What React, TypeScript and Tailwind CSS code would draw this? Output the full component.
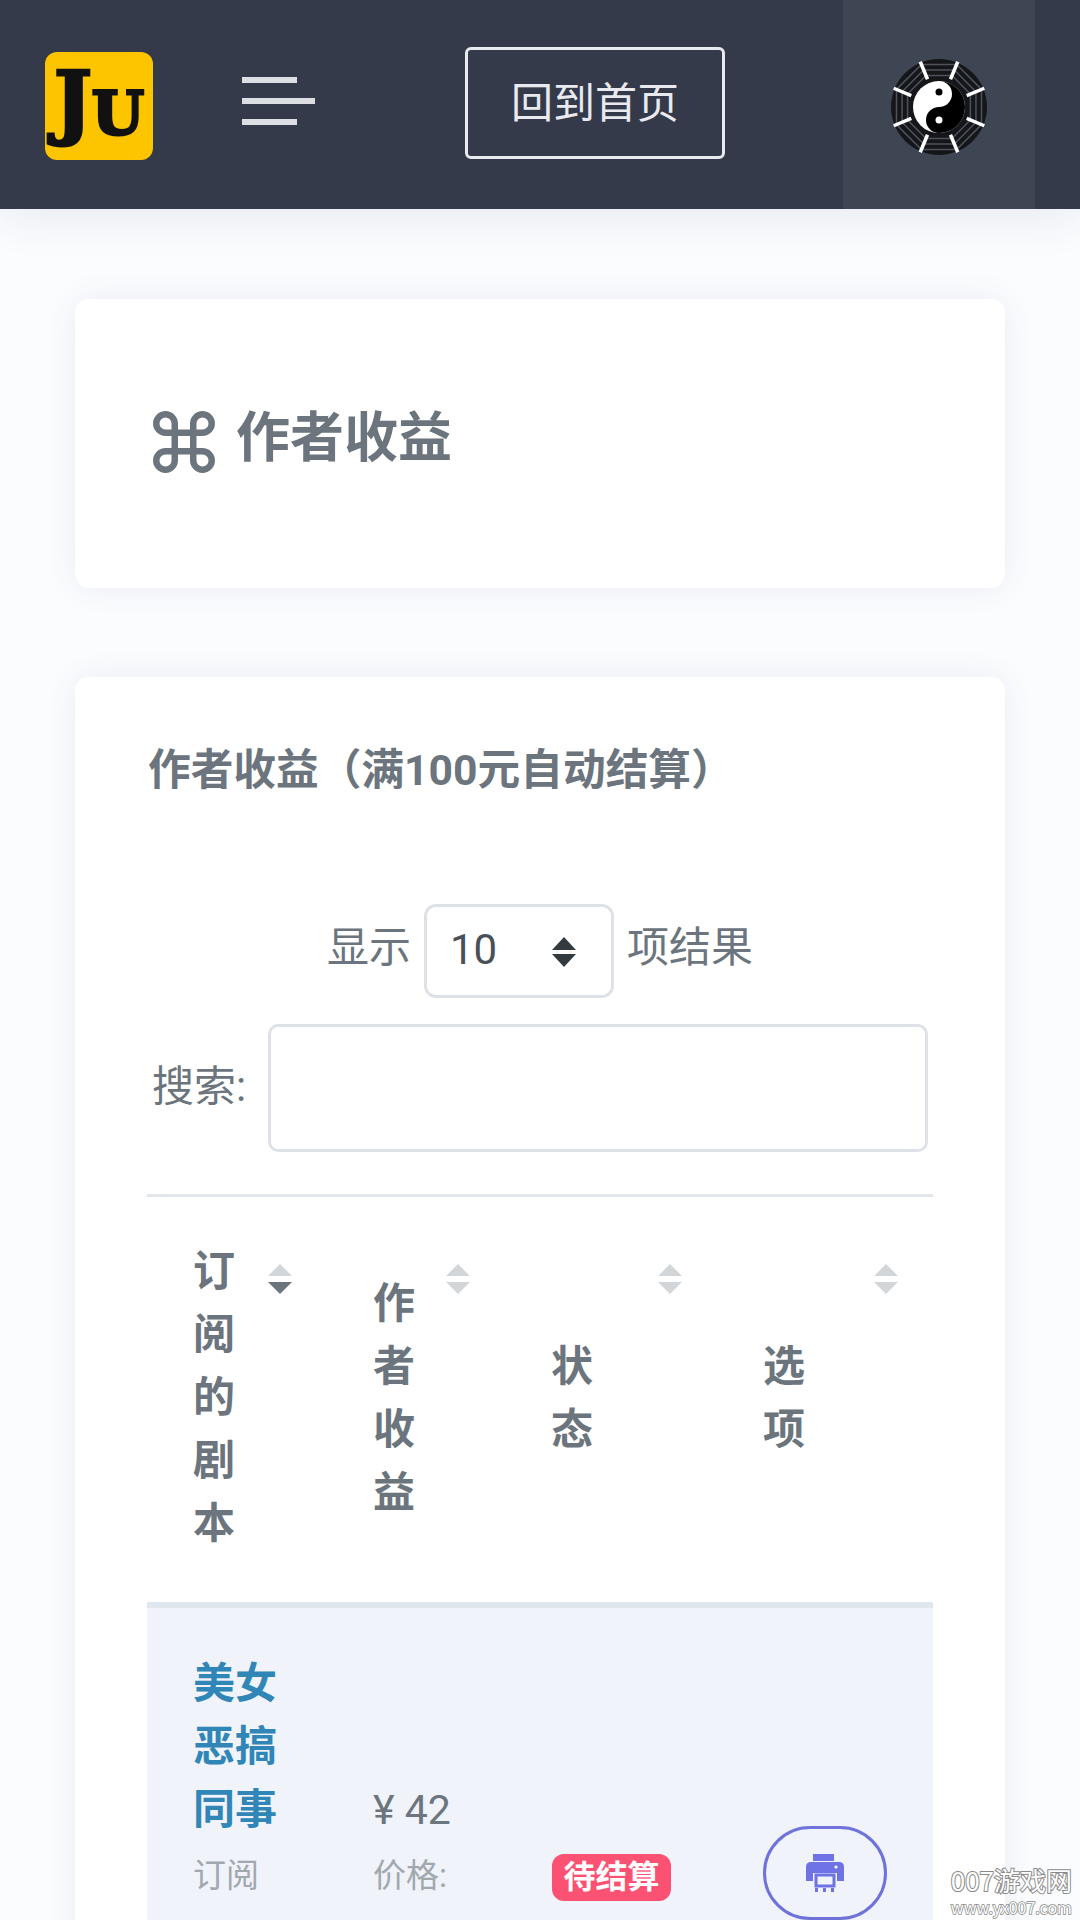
import { Command } from 'lucide-react'

const headers = [
  { label: '订阅的剧本', active: true },
  { label: '作者收益', active: false },
  { label: '状态', active: false },
  { label: '选项', active: false },
]

function SortIcon({ active }: { active: boolean }) {
  return (
    <svg className="absolute right-[35px] top-[67px]" width="24" height="30" viewBox="0 0 24 30">
      <path d="M12 0 24 12H0Z" fill="#d3d6d9" />
      <path d="M0 18H24L12 30Z" fill={active ? '#6c757d' : '#d3d6d9'} />
    </svg>
  )
}

function Logo() {
  return (
    <div className="flex h-[108px] w-[108px] shrink-0 items-start justify-center rounded-[12px] bg-[#fdc500] pt-[4px] font-['DejaVu_Serif',serif] font-bold text-[#111] [-webkit-text-stroke:3px_#111]">
      <span className="text-[80px] leading-[90px]">J</span>
      <span className="mt-[25px] text-[60px] leading-[64px]">U</span>
    </div>
  )
}

// octagon with its corners on the spokes, flat sides top and bottom
function octagon(r: number) {
  return [22.5, 67.5, 112.5, 157.5, 202.5, 247.5, 292.5, 337.5]
    .map((a) => {
      const rad = (a * Math.PI) / 180
      return `${48 + r * Math.cos(rad)},${48 + r * Math.sin(rad)}`
    })
    .join(' ')
}

function Bagua() {
  const spokes = [22.5, 67.5, 112.5, 157.5, 202.5, 247.5, 292.5, 337.5]
  return (
    <svg width="96" height="96" viewBox="0 0 96 96">
      <circle cx="48" cy="48" r="48" fill="#15161a" />
      <polygon points={octagon(46)} fill="none" stroke="#4d525c" strokeWidth="1.5" />
      <polygon points={octagon(40)} fill="none" stroke="#4d525c" strokeWidth="1.5" />
      <polygon points={octagon(34)} fill="none" stroke="#4d525c" strokeWidth="1.5" />
      {spokes.map((a) => (
        <line
          key={a}
          x1="78"
          y1="48"
          x2="97"
          y2="48"
          stroke="#fff"
          strokeWidth="3.5"
          transform={`rotate(${a} 48 48)`}
        />
      ))}
      <circle cx="48" cy="48" r="26" fill="#fff" />
      <path d="M48 22A26 26 0 0 1 48 74A13 13 0 0 1 48 48A13 13 0 0 0 48 22Z" fill="#000" />
      <circle cx="48" cy="33" r="3.5" fill="#000" />
      <circle cx="48" cy="61" r="3.5" fill="#fff" />
    </svg>
  )
}

function PrinterIcon() {
  return (
    <svg width="38" height="38" viewBox="0 0 38 38" fill="#6f72e4">
      <rect x="7" y="0" width="21" height="7" />
      <path d="M5 8H33Q38 8 38 13V27H31V19H7V27H0V13Q0 8 5 8Z" />
      <path d="M10 21H28V32H10Z" fill="none" stroke="#6f72e4" strokeWidth="3" />
      <circle cx="30" cy="13" r="1.6" fill="#fff" />
      <rect x="9" y="34" width="3" height="4" />
      <rect x="17" y="34" width="3" height="4" />
      <rect x="25" y="34" width="3" height="4" />
    </svg>
  )
}

export default function App() {
  return (
    <div className="relative h-[1920px] overflow-hidden bg-[#fafcfe] font-[Roboto,'Noto_Sans_CJK_SC',sans-serif] text-[#6c757d]">
      <header className="relative z-10 flex h-[209px] items-stretch bg-[#343a49] shadow-[0_10px_40px_rgba(60,70,100,0.09)]">
        <div className="flex items-center pl-[45px] pt-[3px]">
          <Logo />
        </div>
        <button type="button" className="mb-[7px] ml-[89px] flex w-[73px] flex-col items-start gap-[15px] self-center">
          <span className="h-[6px] w-[55px] bg-[#dcdee3]" />
          <span className="h-[6px] w-[73px] bg-[#dcdee3]" />
          <span className="h-[6px] w-[55px] bg-[#dcdee3]" />
        </button>
        <div className="ml-[150px] flex items-center pb-[3px]">
          <button
            type="button"
            className="h-[112px] w-[260px] rounded-[6px] border-[3px] border-[#e8eaf0] text-[42px] font-normal text-[#e8eaf0]"
          >
            回到首页
          </button>
        </div>
        <div className="ml-[118px] flex w-[192px] items-center justify-center bg-[#3e4654] pt-[5px]">
          <Bagua />
        </div>
      </header>

      <main className="px-[75px] pt-[90px]">
        <section className="flex h-[289px] items-center gap-[15px] rounded-[14px] bg-white pb-[4px] pl-[72px] shadow-[0_0_30px_rgba(82,73,125,0.09)]">
          <Command size={74} strokeWidth={2.1} className="text-[#6c757d]" />
          <h1 className="pb-[6px] text-[54px] font-bold leading-[70px] text-[#6c757d]">作者收益</h1>
        </section>

        <section className="mt-[89px] rounded-[14px] bg-white px-[72px] pb-[80px] pt-[62px] shadow-[0_0_30px_rgba(82,73,125,0.09)]">
          <h2 className="pl-[1px] text-[42.7px] font-bold leading-[63px] text-[#6c757d]">作者收益（满100元自动结算）</h2>

          <div className="mt-[102px] flex items-center justify-center gap-[13px] text-[42px] leading-[63px]">
            <span className="pb-[8px]">显示</span>
            <div className="relative h-[94px] w-[190px]">
              <select className="h-full w-full appearance-none rounded-[12px] border-[3px] border-[#dee2e6] bg-white pb-[3px] pl-[23px] text-[42px] text-[#495057]">
                <option>10</option>
              </select>
              <svg className="absolute right-[38px] top-[33px]" width="24" height="30" viewBox="0 0 24 30">
                <path d="M12 0 24 13H0Z" fill="#343a40" />
                <path d="M0 17H24L12 30Z" fill="#343a40" />
              </svg>
            </div>
            <span className="pb-[8px]">项结果</span>
          </div>

          <div className="mt-[26px] flex items-center justify-center gap-[22px] text-[42px] leading-[63px]">
            <label htmlFor="search" className="pb-[3px]">搜索:</label>
            <input
              id="search"
              type="text"
              className="h-[128px] w-[660px] rounded-[10px] border-[3px] border-[#dee2e6] bg-white"
            />
          </div>

          <table className="mt-[42px] w-[786px] table-fixed">
            <colgroup>
              <col className="w-[180px]" />
              <col className="w-[178px]" />
              <col className="w-[212px]" />
              <col className="w-[216px]" />
            </colgroup>
            <thead>
              <tr>
                {headers.map((h) => (
                  <th
                    key={h.label}
                    className="relative border-t-[3px] border-b-[6px] border-t-[#e4e7ea] border-b-[#e1e7ee] pb-[47px] pl-[46px] pt-[43px] text-left align-middle text-[42px] font-bold leading-[63px] text-[#6c757d]"
                  >
                    <span className="block w-[42px]">{h.label}</span>
                    <SortIcon active={h.active} />
                  </th>
                ))}
              </tr>
            </thead>
            <tbody>
              <tr className="bg-[#f0f3fa]">
                <td className="h-[534px] pl-[46px] pt-[44px] align-top">
                  <a className="block w-[84px] text-[42px] font-bold leading-[63px] text-[#3086b6]">美女恶搞同事</a>
                  <span className="mt-[11px] block text-[33px] leading-[48px] text-[#a1a8ae]">订阅</span>
                </td>
                <td className="pl-[46px] pt-[171px] align-top">
                  <div className="text-[41px] leading-[63px] text-[#6c757d]">¥ 42</div>
                  <div className="mt-[10px] text-[33px] leading-[48px] text-[#a1a8ae]">价格:</div>
                </td>
                <td className="pl-[47px] pt-[246px] align-top">
                  <span className="inline-block h-[47px] w-[119px] rounded-[12px] bg-[#fb5274] text-center text-[32px] font-bold leading-[46px] text-white">
                    待结算
                  </span>
                </td>
                <td className="pl-[46px] pt-[218px] align-top">
                  <button
                    type="button"
                    className="flex h-[94px] w-[124px] items-center justify-center rounded-[47px] border-[3px] border-[#6f72d8]"
                  >
                    <PrinterIcon />
                  </button>
                </td>
              </tr>
            </tbody>
          </table>
        </section>
      </main>

      <div className="absolute bottom-[4px] right-[8px] text-center font-['Noto_Sans_CJK_SC',sans-serif] text-white">
        <div className="text-[26px] leading-[30px] [-webkit-text-stroke:2px_#8a8a8a] [paint-order:stroke_fill]">007游戏网</div>
        <div className="mt-[3px] text-[16px] leading-[18px] [-webkit-text-stroke:1.5px_#8a8a8a] [paint-order:stroke_fill]">www.yx007.com</div>
      </div>
    </div>
  )
}
